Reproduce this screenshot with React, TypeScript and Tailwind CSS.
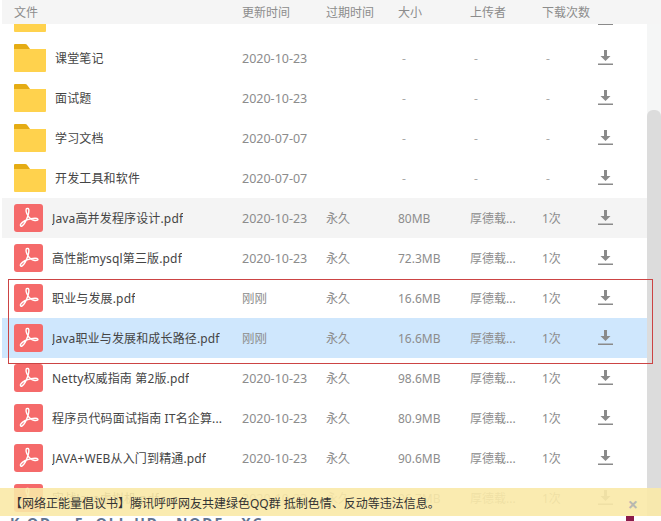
import React from "react";

const font = "font-['Noto_Sans','Noto_Sans_CJK_SC',sans-serif]";

interface FileRow {
  name: string;
  updated: string;
  expire: string;
  size: string;
  owner: string;
  count: string;
  folder?: boolean;
  bg?: string;
}

const rows: FileRow[] = [
  { name: "", updated: "", expire: "", size: "", owner: "", count: "", folder: true },
  { name: "课堂笔记", updated: "2020-10-23", expire: "", size: "-", owner: "-", count: "-", folder: true },
  { name: "面试题", updated: "2020-10-23", expire: "", size: "-", owner: "-", count: "-", folder: true },
  { name: "学习文档", updated: "2020-07-07", expire: "", size: "-", owner: "-", count: "-", folder: true },
  { name: "开发工具和软件", updated: "2020-07-07", expire: "", size: "-", owner: "-", count: "-", folder: true },
  { name: "Java高并发程序设计.pdf", updated: "2020-10-23", expire: "永久", size: "80MB", owner: "厚德载...", count: "1次", bg: "bg-[#f4f4f4]" },
  { name: "高性能mysql第三版.pdf", updated: "2020-10-23", expire: "永久", size: "72.3MB", owner: "厚德载...", count: "1次" },
  { name: "职业与发展.pdf", updated: "刚刚", expire: "永久", size: "16.6MB", owner: "厚德载...", count: "1次" },
  { name: "Java职业与发展和成长路径.pdf", updated: "刚刚", expire: "永久", size: "16.6MB", owner: "厚德载...", count: "1次", bg: "bg-[#cfe7fd]" },
  { name: "Netty权威指南 第2版.pdf", updated: "2020-10-23", expire: "永久", size: "98.6MB", owner: "厚德载...", count: "1次" },
  { name: "程序员代码面试指南 IT名企算...", updated: "2020-10-23", expire: "永久", size: "80.9MB", owner: "厚德载...", count: "1次" },
  { name: "JAVA+WEB从入门到精通.pdf", updated: "2020-10-23", expire: "永久", size: "90.6MB", owner: "厚德载...", count: "1次" },
  { name: "实战Java虚拟机.pdf", updated: "2020-10-23", expire: "永久", size: "96.7MB", owner: "厚德载...", count: "1次" },
];

const FolderIcon = () => (
  <svg width="32" height="28" viewBox="0 0 32 28" className="shrink-0">
    <path d="M0 1a1 1 0 0 1 1-1h10c2 0 3 2 5 5H0z" fill="#e5ac14" />
    <path d="M0 5h32v22a1 1 0 0 1-1 1H1a1 1 0 0 1-1-1z" fill="#ffd24d" />
  </svg>
);

const PdfIcon = () => (
  <div className="h-7 w-[29px] shrink-0 overflow-hidden rounded-[3px] bg-[#f56a6a]">
    <svg width="29" height="28" viewBox="0 0 29 28" fill="none" stroke="#fff" strokeWidth="1.4">
      <path d="M13 4.500c-1.200 0-1.300 2.500-.2 5 1.600 3.700 4.600 6.500 8 7 2.300.3 3.500-.5 3-1.400-.6-1-3.600-1-6.800-.4-4 .8-8 2.500-10 5-1.300 1.700-.4 3 1 2.300 2-1 4.500-6 6-10.500 1-3 1.300-7 0-7z" />
    </svg>
  </div>
);

const DownloadIcon = () => (
  <svg width="15" height="16" viewBox="0 0 15 16" className="shrink-0" fill="#8a8a8a">
    <path d="M6 0h3v6h3.500L7.500 11 2.500 6H6z" />
    <rect x="0" y="13.500" width="15" height="1.500" />
  </svg>
);

const Cell = ({ value, width }: { value: string; width: string }) => (
  <span className={`shrink-0 pt-[2px] ${width} ${value === "-" ? "pl-[4px] text-[#aaa]" : ""}`}>{value}</span>
);

const Row = ({ row }: { row: FileRow }) => (
  <div className={`flex h-10 items-center pl-3 text-xs text-[#8c8c8c] ${row.bg ?? ""}`}>
    <div className="flex w-[228px] shrink-0 items-center">
      {row.folder ? <FolderIcon /> : <PdfIcon />}
      <span className="ml-[9px] truncate pt-[2px] tracking-[0.15px] text-[#444]">{row.name}</span>
    </div>
    <span className="w-[84px] shrink-0 pt-[2px] text-[12.5px]">{row.updated}</span>
    <Cell value={row.expire} width="w-[72px]" />
    <Cell value={row.size} width="w-[72px]" />
    <Cell value={row.owner} width="w-[72px]" />
    <Cell value={row.count} width="w-[56px]" />
    <DownloadIcon />
  </div>
);

export default function App() {
  return (
    <div className={`relative flex h-[521px] w-[661px] flex-col overflow-hidden bg-white ${font}`}>
      {/* Header */}
      <div className="ml-[2px] flex h-6 shrink-0 items-center bg-[#f5f5f5] pl-3 pt-[2px] text-xs text-[#8c8c8c]">
        <span className="w-[228px] shrink-0">文件</span>
        <span className="w-[84px] shrink-0">更新时间</span>
        <span className="w-[72px] shrink-0">过期时间</span>
        <span className="w-[72px] shrink-0">大小</span>
        <span className="w-[72px] shrink-0">上传者</span>
        <span className="shrink-0">下载次数</span>
      </div>

      {/* List + scrollbar */}
      <div className="flex min-h-0 flex-1">
        <div className="min-w-0 flex-1 overflow-hidden pl-[2px]">
          <div className="-mt-[26px]">
            {rows.map((row, i) => (
              <Row key={i} row={row} />
            ))}
          </div>
        </div>
        <div className="w-[14px] shrink-0 bg-[#f5f6f6] pt-[86px]">
          <div className="h-full rounded-t-md bg-[#dcdcdc]" />
        </div>
      </div>

      {/* Red selection box */}
      <div className="absolute left-[8px] top-[279px] h-[85px] w-[645px] border border-[#cc4444]" />

      {/* Notice */}
      <div className="absolute inset-x-0 top-[488px] flex h-7 items-center justify-between bg-[#f9e9a7]/90 pl-[10px] pr-[23px] pt-[3px] text-xs text-[#333]">
        <span>【网络正能量倡议书】腾讯呼呼网友共建绿色QQ群 抵制色情、反动等违法信息。</span>
        <span className="text-lg font-bold leading-none text-[#b8b8b0]">×</span>
      </div>

      {/* Cut off strip below the notice */}
      <div className="absolute inset-x-0 top-[516px] h-[5px] overflow-hidden bg-white">
        <span className="block whitespace-pre pl-[10px] text-sm font-bold leading-[14px] tracking-[2px] text-[#5f7391]">K OD    F  OLL UD   NODE   XC</span>
      </div>
      <div className="absolute left-[626px] top-[516px] h-[5px] w-2 bg-[#8b1a4a]" />
    </div>
  );
}
